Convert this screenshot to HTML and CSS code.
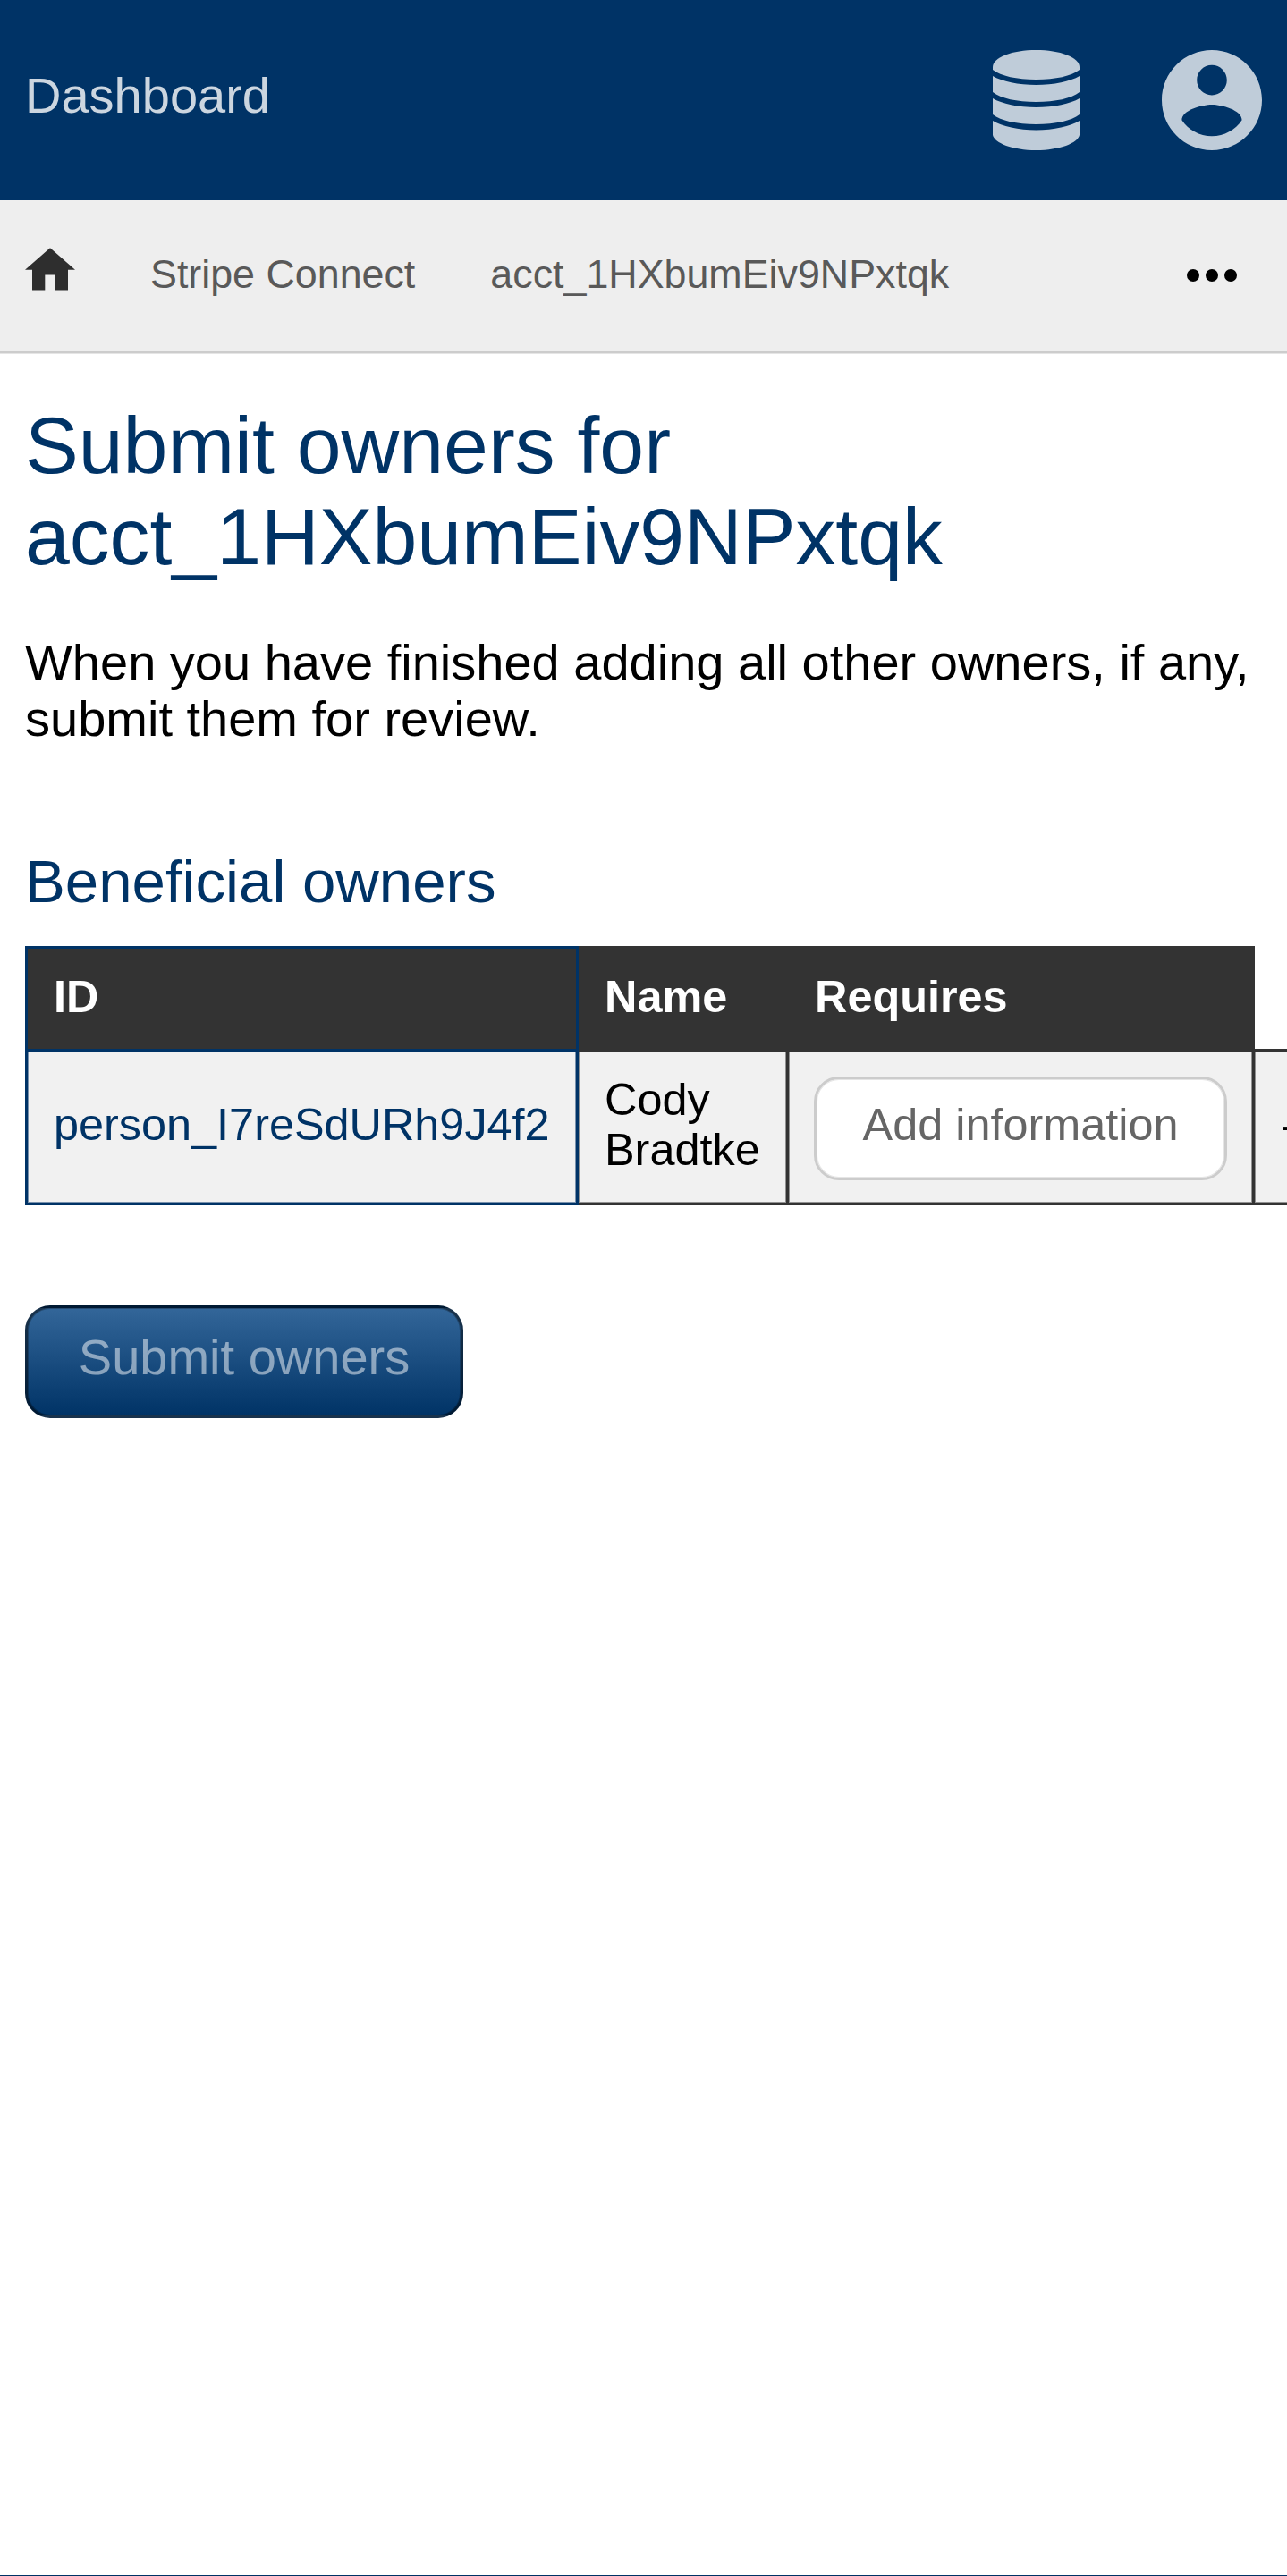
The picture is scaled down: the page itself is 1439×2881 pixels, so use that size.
FILE: index.html
```
<!DOCTYPE html>
<html lang="en">
<head>
<meta charset="utf-8">
<title>Submit owners</title>
<link rel="stylesheet" href="styles.css">
</head>
<body>
<header class="header">
  <a class="brand">Dashboard</a>
  <div class="menus">
    <svg class="icon-db" viewBox="0 0 97 112">
      <path d="M0 19C0 8 22 0 48.500 0S97 8 97 19V22C88 29 70 33 48.500 33S9 29 0 22Z"/>
      <path d="M0 29C10 35 29 39 48.500 39S87 35 97 29V47C88 54 70 58 48.500 58S9 54 0 47Z"/>
      <path d="M0 54C10 60 29 64 48.500 64S87 60 97 54V72C88 79 70 83 48.500 83S9 79 0 72Z"/>
      <path d="M0 79C10 85 29 89.500 48.500 89.500S87 85 97 79V95C95 104 75 112 48.500 112S2 104 0 95Z"/>
    </svg>
    <svg class="icon-user" viewBox="2 2 20 20">
      <path d="M12 2C6.480 2 2 6.480 2 12s4.480 10 10 10 10-4.480 10-10S17.520 2 12 2zm0 3c1.660 0 3 1.340 3 3s-1.340 3-3 3-3-1.340-3-3 1.340-3 3-3zm0 14.200c-2.500 0-4.710-1.280-6-3.220.030-1.990 4-3.080 6-3.080 1.990 0 5.970 1.090 6 3.080-1.290 1.940-3.500 3.220-6 3.220z"/>
    </svg>
  </div>
</header>
<nav class="navbar">
  <svg class="icon-home" viewBox="0 0 56 48"><path d="M28 .3L56 24.800H48V47.500H34V30.500H22.300V47.500H8V24.800H0Z"/></svg>
  <a class="crumb">Stripe Connect</a>
  <a class="crumb">acct_1HXbumEiv9NPxtqk</a>
  <svg class="icon-more" viewBox="0 0 56 14"><circle cx="7" cy="7" r="7"/><circle cx="28" cy="7" r="7"/><circle cx="49" cy="7" r="7"/></svg>
</nav>
<main class="content">
  <h1 class="title">Submit owners for acct_1HXbumEiv9NPxtqk</h1>
  <p class="intro">When you have finished adding all other owners, if any, submit them for review.</p>
  <h2 class="subtitle">Beneficial owners</h2>
  <table class="owners">
    <colgroup><col class="col-id"><col class="col-name"><col class="col-requires"><col class="col-extra"></colgroup>
    <thead>
      <tr><th class="id">ID</th><th>Name</th><th>Requires</th></tr>
    </thead>
    <tbody>
      <tr><td class="id">person_I7reSdURh9J4f2</td><td>Cody Bradtke</td><td><a class="button">Add information</a></td><td>-</td></tr>
    </tbody>
  </table>
  <button class="submit" type="button">Submit owners</button>
</main>
</body>
</html>
```
FILE: styles.css
```
html {
  background: #036;
}
body {
  margin: 0;
  height: 2880px;
  overflow: hidden;
  background: #fff;
  font: 56px/63px "Liberation Sans", Arial, sans-serif;
  color: #000;
}
.header {
  box-sizing: border-box;
  height: 224px;
  padding: 0 28px;
  display: flex;
  align-items: center;
  justify-content: space-between;
  background: #036;
}
.brand {
  color: #ccd6e0;
  padding-bottom: 12px;
}
.menus {
  display: flex;
  gap: 92px;
  fill: #bfccd9;
}
.icon-db {
  width: 97px;
  height: 112px;
}
.icon-user {
  width: 112px;
  height: 112px;
}
.navbar {
  height: 168px;
  padding: 0 56px 0 28px;
  display: flex;
  align-items: center;
  background: #eee;
  border-bottom: 3px solid #ccc;
  box-shadow: 0 1px #e5e5e5;
}
.icon-home {
  width: 56px;
  height: 48px;
  margin-bottom: 14px;
  fill: #2e2e2e;
}
.crumb {
  margin-left: 84px;
  font-size: 44.8px;
  line-height: 52px;
  padding-bottom: 4px;
  color: #595959;
}
.icon-more {
  width: 56px;
  height: 14px;
  margin-left: auto;
}
.content {
  padding: 52px 28px 0;
}
.title {
  margin: 0 0 58px;
  font-size: 89.6px;
  line-height: 102px;
  font-weight: 400;
  color: #036;
}
.intro {
  margin: 0 0 112px;
}
.subtitle {
  margin: 0 0 34px;
  font-size: 67.2px;
  line-height: 77px;
  font-weight: 400;
  color: #036;
}
.owners {
  table-layout: fixed;
  width: 1472px;
  border-collapse: collapse;
  font-size: 50.4px;
  line-height: 56px;
}
.col-id {
  width: 616px;
}
.col-name {
  width: 235px;
}
.col-requires {
  width: 521px;
}
.col-extra {
  width: 100px;
}
.owners th,
.owners td {
  box-sizing: border-box;
  padding: 0 28px 0 29px;
  border: 3px solid #333;
  text-align: left;
}
.owners th {
  height: 115px;
  padding-bottom: 5px;
  background: #333;
  color: #fff;
}
.owners td {
  height: 172px;
  padding-bottom: 5px;
  background: #f1f1f1;
  box-shadow: inset 0 0 0 1px #929292;
}
.owners .id {
  border-color: #036;
}
.owners td.id {
  color: #036;
  box-shadow: inset 0 0 0 1px #7991ac;
}
.button {
  display: block;
  box-sizing: border-box;
  height: 116px;
  margin: 8px 0 0 -1px;
  padding-top: 23px;
  border: 3px solid #ccc;
  border-radius: 28px;
  background: #fff;
  box-shadow: inset 0 0 0 1px #e5e5e5;
  color: #666;
  text-align: center;
}
.submit {
  display: block;
  box-sizing: border-box;
  width: 490px;
  height: 126px;
  margin: 112px 0 0;
  padding: 0 0 12px;
  border: 3px solid rgba(0, 0, 0, .5);
  border-radius: 28px;
  background: linear-gradient(#369, #036);
  box-shadow: inset 0 0 0 1px rgba(0, 0, 0, .25);
  color: rgba(255, 255, 255, .5);
  font: inherit;
}
```
